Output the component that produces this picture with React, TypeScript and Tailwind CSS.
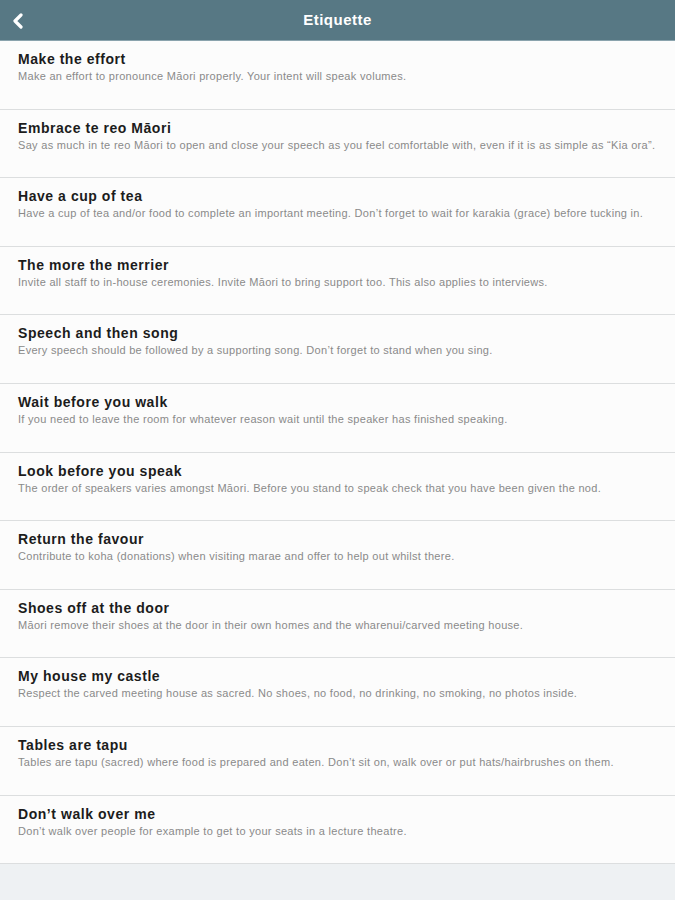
const items = [
  { title: 'Make the effort', text: 'Make an effort to pronounce Māori properly. Your intent will speak volumes.' },
  { title: 'Embrace te reo Māori', text: 'Say as much in te reo Māori to open and close your speech as you feel comfortable with, even if it is as simple as “Kia ora”.' },
  { title: 'Have a cup of tea', text: 'Have a cup of tea and/or food to complete an important meeting. Don’t forget to wait for karakia (grace) before tucking in.' },
  { title: 'The more the merrier', text: 'Invite all staff to in-house ceremonies. Invite Māori to bring support too. This also applies to interviews.' },
  { title: 'Speech and then song', text: 'Every speech should be followed by a supporting song. Don’t forget to stand when you sing.' },
  { title: 'Wait before you walk', text: 'If you need to leave the room for whatever reason wait until the speaker has finished speaking.' },
  { title: 'Look before you speak', text: 'The order of speakers varies amongst Māori. Before you stand to speak check that you have been given the nod.' },
  { title: 'Return the favour', text: 'Contribute to koha (donations) when visiting marae and offer to help out whilst there.' },
  { title: 'Shoes off at the door', text: 'Māori remove their shoes at the door in their own homes and the wharenui/carved meeting house.' },
  { title: 'My house my castle', text: 'Respect the carved meeting house as sacred. No shoes, no food, no drinking, no smoking, no photos inside.' },
  { title: 'Tables are tapu', text: 'Tables are tapu (sacred) where food is prepared and eaten. Don’t sit on, walk over or put hats/hairbrushes on them.' },
  { title: 'Don’t walk over me', text: 'Don’t walk over people for example to get to your seats in a lecture theatre.' },
];

export default function App() {
  return (
    <div className="w-[675px] h-[900px] bg-[#eef1f3] font-['Liberation_Sans',Arial,sans-serif] overflow-hidden">
      {/* Header */}
      <div className="relative h-[41px] bg-[#577884] border-b border-[#8aa3ad] flex items-center justify-center">
        <button className="absolute left-[12px] top-[13px] text-white">
          <svg width="12" height="16" viewBox="0 0 12 16" fill="none">
            <path d="M9 2 L3 8 L9 14" stroke="currentColor" strokeWidth="3.2" strokeLinecap="round" strokeLinejoin="round" />
          </svg>
        </button>
        <h1 className="text-white text-[15px] font-bold tracking-[0.5px] pt-[1px]">Etiquette</h1>
      </div>

      {/* List */}
      <ul className="bg-[#fcfcfc]">
        {items.map((item) => (
          <li key={item.title} className="h-[68.6px] border-b border-[#dcdedf] px-[18px] pt-[9px]">
            <div className="text-[14px] font-bold text-[#1c1c1c] leading-[18px] tracking-[0.55px]">{item.title}</div>
            <div className="text-[11px] text-[#8a8a8a] leading-[17px] tracking-[0.3px]">{item.text}</div>
          </li>
        ))}
      </ul>
    </div>
  );
}
